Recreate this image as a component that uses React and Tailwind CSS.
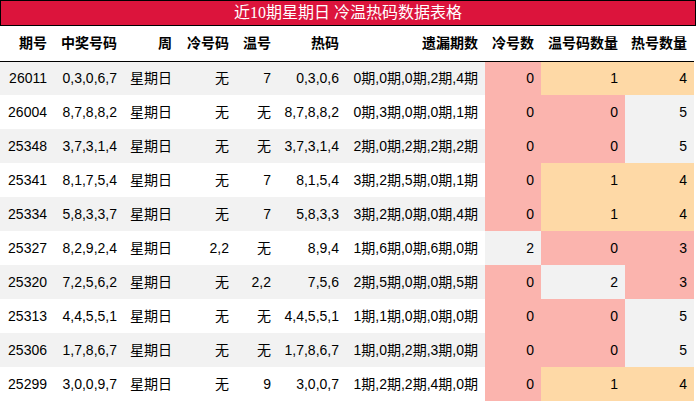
const rows = [
    ["26011", "0,3,0,6,7", "星期日", "无", "7", "0,3,0,6", "0期,0期,0期,2期,4期", 0, 1, 4],
    ["26004", "8,7,8,8,2", "星期日", "无", "无", "8,7,8,8,2", "0期,3期,0期,0期,1期", 0, 0, 5],
    ["25348", "3,7,3,1,4", "星期日", "无", "无", "3,7,3,1,4", "2期,0期,2期,2期,2期", 0, 0, 5],
    ["25341", "8,1,7,5,4", "星期日", "无", "7", "8,1,5,4", "3期,2期,5期,0期,1期", 0, 1, 4],
    ["25334", "5,8,3,3,7", "星期日", "无", "7", "5,8,3,3", "3期,2期,0期,0期,4期", 0, 1, 4],
    ["25327", "8,2,9,2,4", "星期日", "2,2", "无", "8,9,4", "1期,6期,0期,6期,0期", 2, 0, 3],
    ["25320", "7,2,5,6,2", "星期日", "无", "2,2", "7,5,6", "2期,5期,0期,0期,5期", 0, 2, 3],
    ["25313", "4,4,5,5,1", "星期日", "无", "无", "4,4,5,5,1", "1期,1期,0期,0期,0期", 0, 0, 5],
    ["25306", "1,7,8,6,7", "星期日", "无", "无", "1,7,8,6,7", "1期,0期,2期,3期,0期", 0, 0, 5],
    ["25299", "3,0,0,9,7", "星期日", "无", "9", "3,0,0,7", "1期,2期,2期,4期,0期", 0, 1, 4],
]

const headers = ["期号", "中奖号码", "周", "冷号码", "温号", "热码", "遗漏期数", "冷号数", "温号码数量", "热号数量"]
const widths = ["w-[54px]", "w-[70px]", "w-[55px]", "w-[57px]", "w-[42px]", "w-[68px]", "w-[139px]", "w-[56px]", "w-[84px]", "w-[69px]"]

const countColor = {
    0: "bg-[#fbb4ae]",
    1: "bg-[#fed9a6]",
    2: "bg-[#f2f2f2]",
    3: "bg-[#fbb4ae]",
    4: "bg-[#fed9a6]",
    5: "bg-[#f2f2f2]",
}

export default function App() {
    return (
        <div className="w-[696px] h-[403px] bg-white text-[14px] text-black font-['Liberation_Sans','Noto_Sans_CJK_SC',sans-serif]">
            <div className="w-[696px] h-[26px] border border-black bg-[#dc143c] text-white text-[16px] leading-[24px] text-center font-['Liberation_Serif','Noto_Sans_CJK_SC',serif]">
                近10期星期日 冷温热码数据表格
            </div>
            <table className="border-collapse table-fixed w-[694px]">
                <thead>
                    <tr className="h-[35px] border-b border-black">
                        {headers.map((h, i) => (
                            <th key={h} className={`${widths[i]} p-0 pr-[7px] text-right font-bold`}>
                                {h}
                            </th>
                        ))}
                    </tr>
                </thead>
                <tbody>
                    {rows.map((r, ri) => (
                        <tr key={r[0]} className={`h-[34px] ${ri % 2 === 0 ? "bg-[#f2f2f2]" : "bg-white"}`}>
                            {r.map((v, ci) => (
                                <td
                                    key={ci}
                                    className={`p-0 pr-[7px] text-right ${ci >= 7 ? countColor[v] : ""}`}
                                >
                                    {v}
                                </td>
                            ))}
                        </tr>
                    ))}
                </tbody>
            </table>
        </div>
    )
}
